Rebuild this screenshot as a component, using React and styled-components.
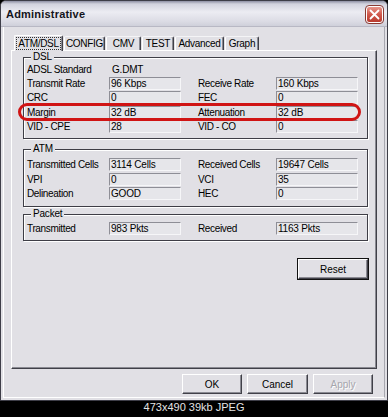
import styled, { createGlobalStyle } from "styled-components";

const FACE = "#e1e0e5";
const UI = `"Liberation Sans", Arial, sans-serif`;

const GlobalStyle = createGlobalStyle`
  html, body {
    margin: 0;
    padding: 0;
    background: #000;
  }
  body {
    width: 388px;
    height: 417px;
    overflow: hidden;
    font-family: ${UI};
  }
`;

const dslRows = [
  ["Transmit Rate", "96 Kbps", "Receive Rate", "160 Kbps"],
  ["CRC", "0", "FEC", "0"],
  ["Margin", "32 dB", "Attenuation", "32 dB"],
  ["VID - CPE", "28", "VID - CO", "0"],
];

const atmRows = [
  ["Transmitted Cells", "3114 Cells", "Received Cells", "19647 Cells"],
  ["VPI", "0", "VCI", "35"],
  ["Delineation", "GOOD", "HEC", "0"],
];

const packetRows = [["Transmitted", "983 Pkts", "Received", "1163 Pkts"]];

const tabs = [
  { name: "ATM/DSL", w: 49, active: true },
  { name: "CONFIG", w: 41 },
  { name: "CMV", w: 35 },
  { name: "TEST", w: 32 },
  { name: "Advanced", w: 49 },
  { name: "Graph", w: 34 },
];

function Fields({ rows }) {
  return rows.map(([l1, v1, l2, v2]) => (
    <FieldRow key={l1}>
      <Label>{l1}</Label>
      <Value>{v1}</Value>
      <Label>{l2}</Label>
      <Value $wide>{v2}</Value>
    </FieldRow>
  ));
}

function App() {
  return (
    <Screen>
      <GlobalStyle />
      <Window>
        <TitleBar>
          <Title>Administrative</Title>
          <CloseButton>
            <svg width="11" height="11" viewBox="0 0 11 11">
              <path
                d="M1.5 1.5 L9.5 9.5 M9.5 1.5 L1.5 9.5"
                stroke="#fff"
                strokeWidth="1.8"
                strokeLinecap="round"
              />
            </svg>
          </CloseButton>
        </TitleBar>
        <Body>
          <TabStrip>
            {tabs.map((t) => (
              <Tab key={t.name} $w={t.w} $active={t.active}>
                {t.active ? <Focus>{t.name}</Focus> : t.name}
              </Tab>
            ))}
          </TabStrip>
          <Panel>
            <Group $top={0} $bottom={4}>
              <Legend>DSL</Legend>
              <FieldGrid>
                <Highlight />
                <FieldRow $short>
                  <Label>ADSL Standard</Label>
                  <PlainValue>G.DMT</PlainValue>
                </FieldRow>
                <Fields rows={dslRows} />
              </FieldGrid>
            </Group>
            <Group $top={2.5} $bottom={5} $gap={4}>
              <Legend>ATM</Legend>
              <FieldGrid>
                <Fields rows={atmRows} />
              </FieldGrid>
            </Group>
            <Group $top={1} $bottom={4.5} $gap={1}>
              <Legend>Packet</Legend>
              <FieldGrid>
                <Fields rows={packetRows} />
              </FieldGrid>
            </Group>
            <ResetRow>
              <Button $w={70} $default>
                Reset
              </Button>
            </ResetRow>
          </Panel>
          <ButtonBar>
            <Button $w={60}>OK</Button>
            <Button $w={61}>Cancel</Button>
            <Button $w={60} disabled>
              Apply
            </Button>
          </ButtonBar>
        </Body>
      </Window>
      <Caption>473x490 39kb JPEG</Caption>
    </Screen>
  );
}

const Screen = styled.div`
  width: 388px;
  height: 417px;
  background: #000;
  display: flex;
  flex-direction: column;
`;

const Window = styled.div`
  width: 388px;
  height: 401px;
  box-sizing: border-box;
  border: 1px solid #3e3e48;
  border-radius: 6px 6px 0 0;
  background: ${FACE};
  display: flex;
  flex-direction: column;
  overflow: hidden;
`;

const TitleBar = styled.div`
  height: 25px;
  flex: none;
  display: flex;
  align-items: center;
  justify-content: space-between;
  padding: 0 4px 0 5px;
  background: linear-gradient(
    to bottom,
    #8e90a4 0px,
    #d2d3de 3px,
    #ececf2 11px,
    #dcdce5 20px,
    #cfd0da 25px
  );
  border-bottom: 1px solid #b8b8c4;
`;

const Title = styled.div`
  font: bold 11px ${UI};
  color: #14141c;
  letter-spacing: 0.2px;
`;

const CloseButton = styled.div`
  width: 17px;
  height: 17px;
  box-sizing: border-box;
  border-radius: 3px;
  border: 1px solid #fff;
  outline: 1px solid #8a3a32;
  background: linear-gradient(to bottom, #e7958a, #d0584b 50%, #b93a2e);
  display: flex;
  align-items: center;
  justify-content: center;
  margin-top: 1px;
`;

const Body = styled.div`
  flex: 1;
  margin: 0 2px 2px;
  padding: 7px 7px 0;
  border-left: 1px solid #fff;
  border-right: 1px solid #a8a8b0;
  border-bottom: 1px solid #fff;
  display: flex;
  flex-direction: column;
`;

const TabStrip = styled.div`
  height: 16px;
  display: flex;
  align-items: flex-end;
  padding-left: 3px;
  position: relative;
  z-index: 1;
`;

const Tab = styled.div`
  width: ${(p) => p.$w}px;
  height: ${(p) => (p.$active ? 16 : 14)}px;
  margin-bottom: ${(p) => (p.$active ? -1 : 0)}px;
  margin-right: 1px;
  box-sizing: border-box;
  border-left: 1px solid #fff;
  border-top: 1px solid ${(p) => (p.$active ? "#fff" : "#f4f4f6")};
  border-right: 1px solid #404048;
  box-shadow: inset -1px 0 0 #8a8a92;
  border-radius: 2px 2px 0 0;
  background: ${FACE};
  font: 10px ${UI};
  letter-spacing: -0.3px;
  color: #000;
  display: flex;
  align-items: center;
  justify-content: center;
`;

const Focus = styled.span`
  outline: 1px dotted #333;
  outline-offset: 0;
  padding: 0 1px;
  line-height: 11px;
`;

const Panel = styled.div`
  height: 319px;
  box-sizing: border-box;
  border: 1px solid;
  border-color: #fff #404048 #404048 #fff;
  box-shadow: inset -1px -1px 0 #8a8a92;
  padding: 0 8px 0 11px;
  display: flex;
  flex-direction: column;
`;

const Group = styled.fieldset`
  margin: ${(p) => p.$gap || 0}px 0 0;
  padding: ${(p) => p.$top}px 9px ${(p) => p.$bottom}px 3px;
  border: 1px solid #3e3e46;
  box-shadow: 1px 1px 0 #fff, inset 1px 1px 0 #fff;
  min-width: 0;
`;

const Legend = styled.legend`
  margin-left: 4px;
  padding: 0 2px;
  background: ${FACE};
  font: 10px ${UI};
  line-height: 12px;
  letter-spacing: -0.2px;
  color: #000;
`;

const FieldGrid = styled.div`
  position: relative;
`;

const FieldRow = styled.div`
  display: grid;
  grid-template-columns: 82px 89px 78px 82px;
  align-items: center;
  height: ${(p) => (p.$short ? 13 : 14.5)}px;
`;

const Label = styled.div`
  font: 10px ${UI};
  letter-spacing: -0.35px;
  color: #000;
  white-space: nowrap;
`;

const Value = styled.div`
  width: ${(p) => (p.$wide ? 82 : 72)}px;
  height: 13px;
  box-sizing: border-box;
  border: 1px solid;
  border-color: #8e8e96 #f6f6f8 #f6f6f8 #8e8e96;
  background: #e6e6ea;
  padding-left: 1px;
  font: 10px ${UI};
  line-height: 11px;
  letter-spacing: -0.2px;
  color: #000;
  white-space: nowrap;
`;

const PlainValue = styled.div`
  padding-left: 3px;
  font: 10px ${UI};
  letter-spacing: -0.2px;
  color: #000;
`;

const Highlight = styled.div`
  position: absolute;
  left: -9px;
  top: 40px;
  width: 343px;
  height: 18px;
  box-sizing: border-box;
  border: 3px solid #d01414;
  border-radius: 9px;
  pointer-events: none;
`;

const ResetRow = styled.div`
  display: flex;
  justify-content: flex-end;
  margin-top: 18px;
`;

const Button = styled.button`
  width: ${(p) => p.$w}px;
  height: 20px;
  box-sizing: border-box;
  padding: 0;
  border: 1px solid;
  border-color: #fff #404048 #404048 #fff;
  box-shadow: inset -1px -1px 0 #8a8a92;
  outline: ${(p) => (p.$default ? "1px solid #111" : "none")};
  background: ${FACE};
  font: 10px ${UI};
  color: #000;

  &:disabled {
    color: #a6a6ac;
    text-shadow: 1px 1px 0 #fff;
  }
`;

const ButtonBar = styled.div`
  display: flex;
  justify-content: flex-end;
  gap: 5px;
  padding-right: 4px;
  margin-top: 5px;
`;

const Caption = styled.div`
  height: 16px;
  line-height: 16px;
  text-align: center;
  font: 11px ${UI};
  color: #e4e4e4;
`;

export default App;
